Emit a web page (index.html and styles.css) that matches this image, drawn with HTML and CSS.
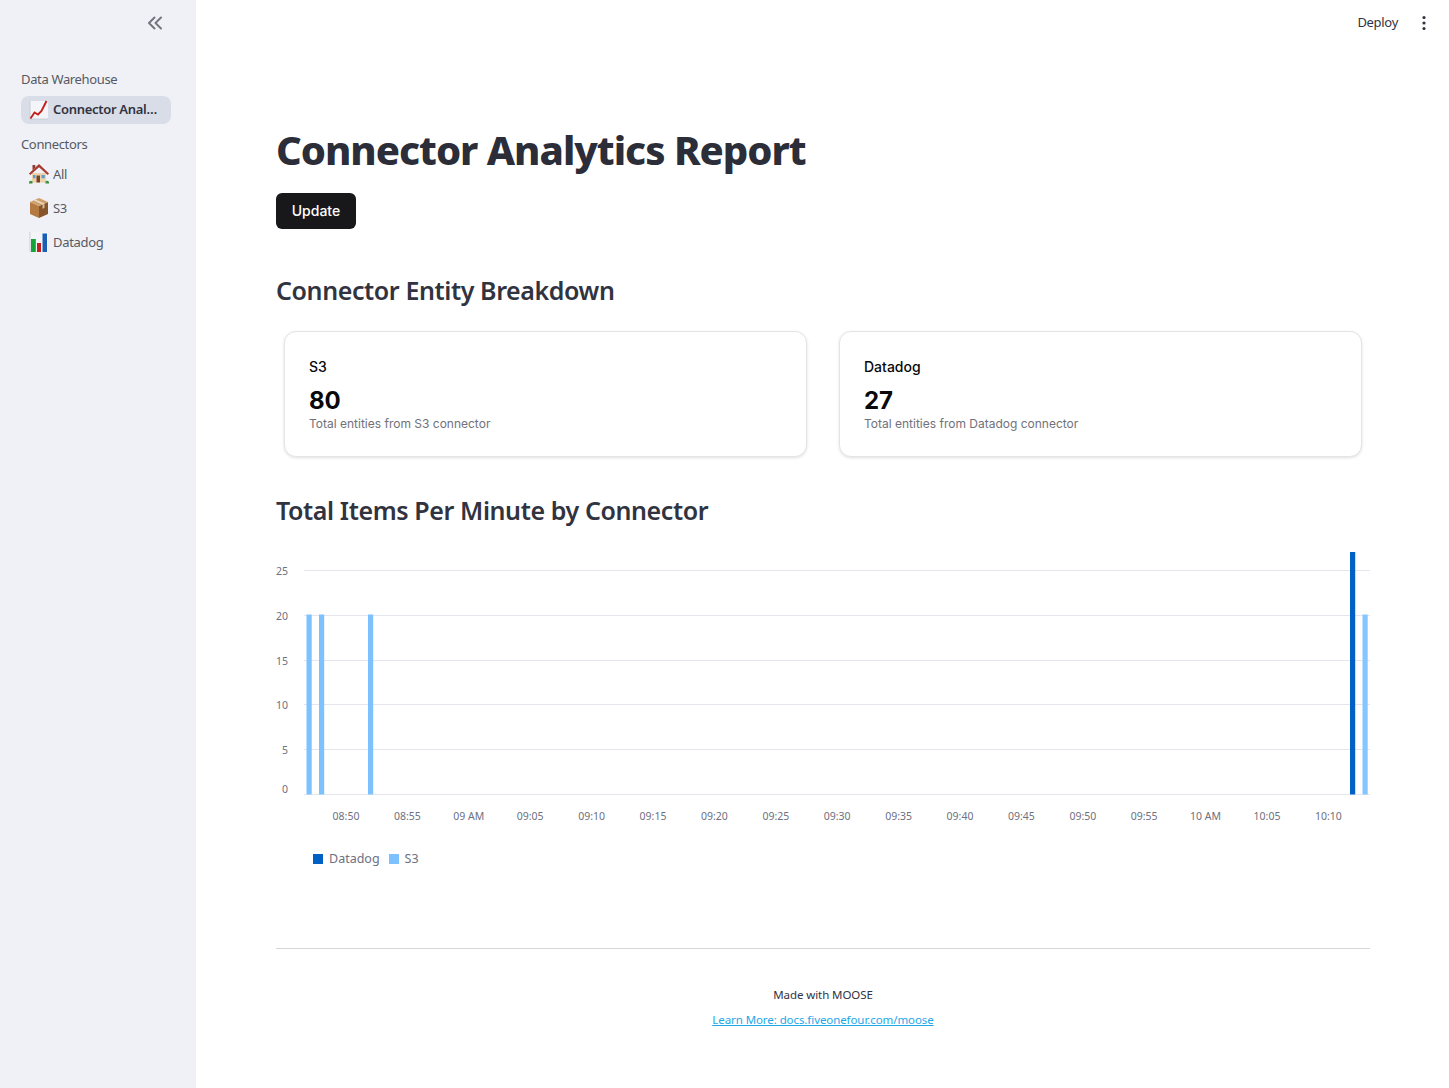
FILE: index.html
```html
<!DOCTYPE html>
<html lang="en">
<head>
  <meta charset="UTF-8">
  <title>Connector Analytics Report</title>
  <link rel="stylesheet" href="styles.css">
</head>
<body>

  <aside class="sidebar">
    <div class="collapse">
      <svg width="16" height="16" viewBox="0 0 16 16" fill="none" stroke="#73767f" stroke-width="2" stroke-linecap="round" stroke-linejoin="round">
        <path d="M7.5 2.5 2 8l5.5 5.5"/>
        <path d="M14 2.5 8.5 8l5.5 5.5"/>
      </svg>
    </div>

    <div class="nav-group">Data Warehouse</div>
    <a class="nav-item active" href="#">
      <svg class="emoji" width="20" height="20" viewBox="0 0 20 20">
        <rect x="1" y="1" width="18" height="18" fill="#f4f5f8"/>
        <path d="M1 19V1M1 19h18" stroke="#c3c7d0" stroke-width=".8" fill="none"/>
        <path d="M1.5 18.5 5.5 12.5l3.5 2 3.5-3.5L17.5 1" stroke="#c4201d" stroke-width="1.9" fill="none"/>
      </svg>
      <span class="nav-label">Connector Analytics Report</span>
    </a>

    <div class="nav-group second">Connectors</div>
    <a class="nav-item" href="#">
      <svg class="emoji" width="20" height="20" viewBox="0 0 20 20">
        <path d="M3 9h14v9.5H3z" fill="#ecd3a9"/>
        <path d="M10 0 0 9.5l1.3 1.5L10 3.300 18.700 11 20 9.500z" fill="#a8392f"/>
        <path d="M3.5 1h2.800v2.500L3.500 6z" fill="#8d3a30"/>
        <path d="M7.5 11.500h3.500v7H7.500z" fill="#7a4526"/>
        <path d="M12.500 11h3.200v3.200h-3.200zM4 11h2.500v3.200H4z" fill="#5b9bd1"/>
        <path d="M0 18a2 2 0 0 1 3.500-.5v2H0zM16.500 17.500A2 2 0 0 1 20 18v1.500h-3.500z" fill="#3f8f3a"/>
      </svg>
      <span class="nav-label">All</span>
    </a>
    <a class="nav-item" href="#">
      <svg class="emoji" width="20" height="20" viewBox="0 0 20 20">
        <path d="M10 8v12L1 16V4z" fill="#b37a42"/>
        <path d="M10 8v12l9-4V4z" fill="#86552b"/>
        <path d="M1 4 10 0l9 4-9 4z" fill="#cf9f6b"/>
        <path d="m4.500 2.400 9 4 2-.9-9-4z" fill="#e9d8bb"/>
        <path d="M13.500 6.400v4.400l2-.9V5.500z" fill="#d2bd98"/>
      </svg>
      <span class="nav-label">S3</span>
    </a>
    <a class="nav-item" href="#">
      <svg class="emoji" width="20" height="20" viewBox="0 0 20 20">
        <rect x="1" y="0" width="18" height="20" fill="#f4f5f8"/>
        <path d="M1 20V0" stroke="#c3c7d0" stroke-width=".8"/>
        <rect x="2" y="7" width="4.800" height="13" fill="#13a538"/>
        <rect x="8" y="11" width="4" height="9" fill="#c4201d"/>
        <rect x="13.500" y="1.500" width="4.500" height="18.500" fill="#1a5fb4"/>
      </svg>
      <span class="nav-label">Datadog</span>
    </a>
  </aside>

  <div class="main">
    <header class="topbar">
      <span class="deploy">Deploy</span>
      <svg width="16" height="16" viewBox="0 0 16 16" fill="#31333f">
        <circle cx="8" cy="2.500" r="1.600"/>
        <circle cx="8" cy="8" r="1.600"/>
        <circle cx="8" cy="13.500" r="1.600"/>
      </svg>
    </header>

    <section class="content">
      <h1>Connector Analytics Report</h1>
      <button class="update-btn">Update</button>

      <h2 class="first-head">Connector Entity Breakdown</h2>
      <div class="cards">
        <div class="card">
          <div class="card-title">S3</div>
          <div class="card-value">80</div>
          <div class="card-desc">Total entities from S3 connector</div>
        </div>
        <div class="card">
          <div class="card-title">Datadog</div>
          <div class="card-value">27</div>
          <div class="card-desc">Total entities from Datadog connector</div>
        </div>
      </div>

      <h2 class="second-head">Total Items Per Minute by Connector</h2>
      <div class="chart">
        <svg id="chartSvg" width="1094" height="290" viewBox="276 540 1094 290"></svg>
        <div class="legend">
          <span class="swatch datadog"></span><span class="legend-label">Datadog</span>
          <span class="swatch s3"></span><span class="legend-label">S3</span>
        </div>
      </div>

      <hr class="divider">
      <footer class="footer">
        <p>Made with MOOSE</p>
        <a href="#">Learn More: docs.fiveonefour.com/moose</a>
      </footer>
    </section>
  </div>

  <script>
    const svg = document.getElementById("chartSvg");
    const grid = [[25, 570.5], [20, 615.5], [15, 660.5], [10, 704.5], [5, 749.5], [0, 794.5]];
    const times = ["08:50", "08:55", "09 AM", "09:05", "09:10", "09:15", "09:20", "09:25", "09:30",
      "09:35", "09:40", "09:45", "09:50", "09:55", "10 AM", "10:05", "10:10"];
    const bars = [
      [306.5, 614.5, "#7dc2ff"], [319, 614.5, "#7dc2ff"], [368, 614.5, "#7dc2ff"],
      [1350, 552, "#0060c4"], [1362.5, 614.5, "#85c6ff"]
    ];

    let out = "";
    grid.forEach(([value, y]) => {
      out += `<line x1="304" x2="1370" y1="${y}" y2="${y}" stroke="#e3e6ef" stroke-width="1"/>`;
      const labelY = value === 0 ? y - 1.5 : y + 4.5;
      out += `<text class="tick" x="288" y="${labelY}" text-anchor="end">${value}</text>`;
    });
    times.forEach((t, i) => {
      out += `<text class="tick" x="${346 + i * 61.4}" y="820" text-anchor="middle">${t}</text>`;
    });
    bars.forEach(([x, y, color]) => {
      out += `<rect x="${x}" y="${y}" width="5.2" height="${794.5 - y}" fill="${color}"/>`;
    });
    svg.innerHTML = out;
  </script>

</body>
</html>
```

FILE: styles.css
```css
* {
  box-sizing: border-box;
}

body {
  margin: 0;
  display: flex;
  min-height: 1088px;
  font-family: "Noto Sans", sans-serif;
  color: #31333f;
  background-color: #fff;
}

.sidebar {
  width: 196px;
  flex-shrink: 0;
  padding: 15px 25px 0 21px;
  background-color: #eff1f6;
}

.collapse {
  display: flex;
  justify-content: flex-end;
  padding-right: 8px;
  margin-bottom: 38px;
}

.nav-group {
  height: 20px;
  font-size: 13px;
  line-height: 20px;
  letter-spacing: -0.35px;
  color: #565963;
  margin-bottom: 7px;
}

.nav-group.second {
  margin-top: 10px;
  margin-bottom: 6px;
}

.nav-item {
  display: flex;
  align-items: center;
  gap: 4px;
  height: 28px;
  margin-bottom: 6px;
  padding-left: 8px;
  border-radius: 8px;
  font-size: 13px;
  letter-spacing: -0.3px;
  color: #565963;
  text-decoration: none;
}

.nav-item.active {
  background-color: #d8dde8;
  color: #31333f;
  font-weight: 600;
  margin-bottom: 0;
}

.nav-item.active .nav-label {
  margin-top: -2px;
  padding-right: 9px;
}

.nav-label {
  white-space: nowrap;
  overflow: hidden;
  text-overflow: ellipsis;
  padding-right: 11px;
}

.emoji {
  flex-shrink: 0;
}

.main {
  flex: 1;
  min-width: 0;
}

.topbar {
  display: flex;
  justify-content: flex-end;
  align-items: center;
  gap: 18px;
  height: 45px;
  padding-right: 17px;
  font-size: 13px;
  letter-spacing: -0.3px;
}

.deploy {
  margin-top: -1px;
}

.content {
  padding: 0 79px 0 80px;
}

h1 {
  margin: 0;
  padding-top: 77px;
  font-size: 40px;
  line-height: 56px;
  font-weight: 800;
  letter-spacing: -1px;
  color: #2b2d38;
}

.update-btn {
  display: block;
  width: 80px;
  height: 36px;
  margin-top: 15px;
  padding: 0 0 2px;
  border: none;
  border-radius: 6px;
  background-color: #18181b;
  color: #fff;
  font-family: Inter, sans-serif;
  font-size: 14px;
  font-weight: 500;
}

h2 {
  margin: 0;
  font-size: 25px;
  line-height: 36px;
  font-weight: 600;
  letter-spacing: -0.4px;
  color: #31333f;
}

.first-head {
  margin-top: 43px;
}

.second-head {
  margin-top: 35px;
}

.cards {
  display: grid;
  grid-template-columns: 523px 523px;
  gap: 32px;
  margin: 23px 0 0 8px;
}

.card {
  height: 126px;
  padding: 25px 24px 24px;
  border: 1px solid #e4e4e7;
  border-radius: 12px;
  background-color: #fff;
  box-shadow: 0 1px 3px rgba(0, 0, 0, 0.12);
  font-family: Inter, sans-serif;
}

.card-title {
  font-size: 14px;
  line-height: 20px;
  font-weight: 500;
  color: #09090b;
}

.card-value {
  margin-top: 9px;
  font-size: 24px;
  line-height: 30px;
  font-weight: 700;
  color: #09090b;
}

.card-desc {
  font-size: 12px;
  line-height: 16px;
  color: #71717a;
}

.chart {
  margin-top: 12px;
  height: 408px;
}

.chart svg {
  display: block;
}

.tick {
  font-family: "Noto Sans", sans-serif;
  font-size: 10.5px;
  fill: #6d7080;
}

.legend {
  display: flex;
  align-items: center;
  margin: 20px 0 0 37px;
  font-size: 12.5px;
  color: #6d7080;
}

.swatch {
  width: 10px;
  height: 10px;
  margin-right: 6px;
}

.swatch.datadog {
  background-color: #0060c4;
}

.swatch.s3 {
  background-color: #7dc2ff;
}

.legend-label {
  margin-right: 9px;
}

.divider {
  margin: 0;
  border: none;
  border-top: 1px solid #d5d6da;
}

.footer {
  padding-top: 38px;
  text-align: center;
  font-size: 11.5px;
  letter-spacing: -0.08px;
}

.footer p {
  margin: 0 0 9px;
  line-height: 16px;
}

.footer a {
  color: #1ea7e8;
  line-height: 16px;
}
```
